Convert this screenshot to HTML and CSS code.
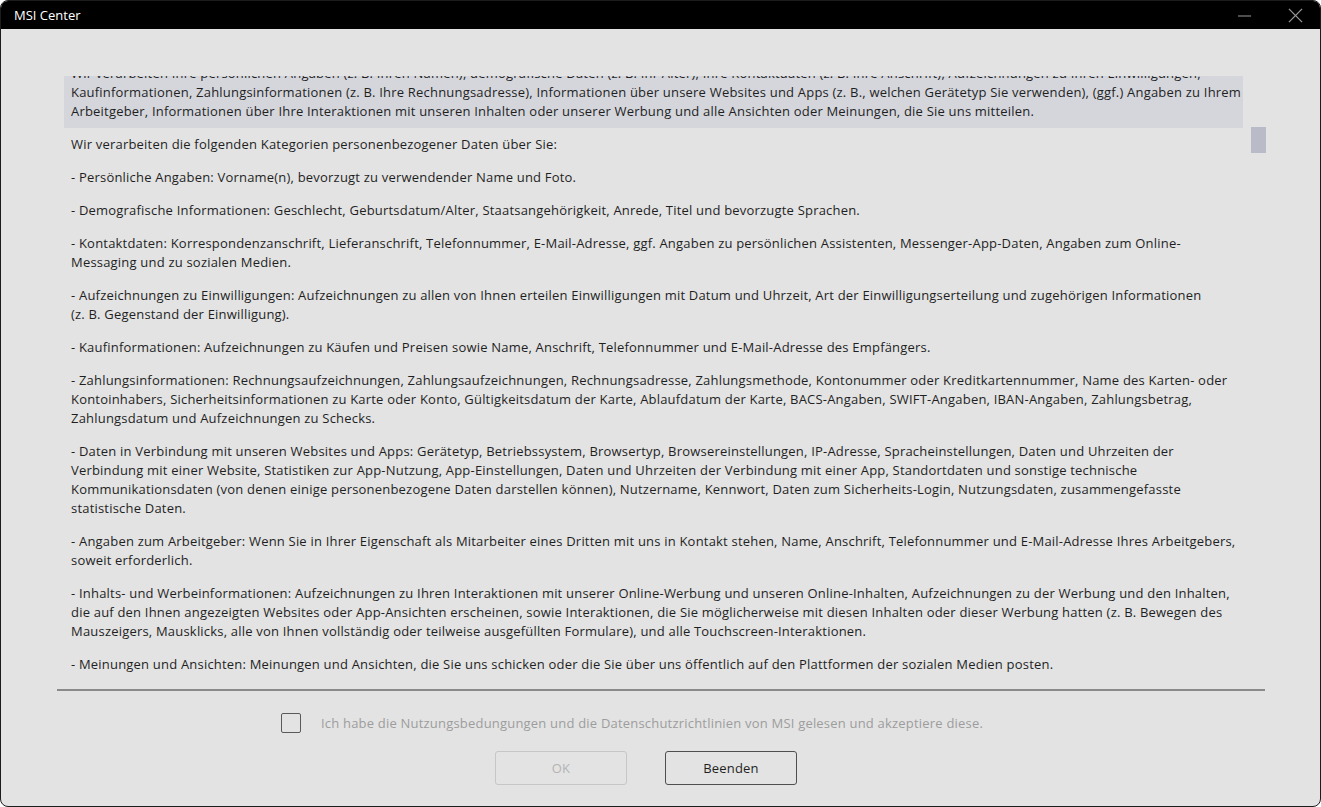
FILE: index.html
```html
<!DOCTYPE html>
<html>
<head>
    <meta charset="UTF-8">
    <title>MSI Center</title>
    <link rel="stylesheet" href="styles.css">
</head>
<body>
<div class="window">
    <div class="titlebar">
        <span class="title">MSI Center</span>
        <div class="window-controls">
            <svg class="win-btn" viewBox="0 0 16 16" fill="none" stroke="currentColor" stroke-width="1.2">
                <line x1="1" y1="8.5" x2="15" y2="8.5"></line>
            </svg>
            <svg class="win-btn" viewBox="0 0 16 16" fill="none" stroke="currentColor" stroke-width="1.3">
                <line x1="1" y1="1" x2="15" y2="15"></line>
                <line x1="15" y1="1" x2="1" y2="15"></line>
            </svg>
        </div>
    </div>

    <div class="content">
        <div class="doc-area">
            <div class="doc">
                <div class="doc-inner">
                    <p class="selected">Wir verarbeiten Ihre persönlichen Angaben (z. B. Ihren Namen), demografische Daten (z. B. Ihr Alter), Ihre Kontaktdaten (z. B. Ihre Anschrift), Aufzeichnungen zu Ihren Einwilligungen,<br>Kaufinformationen, Zahlungsinformationen (z. B. Ihre Rechnungsadresse), Informationen über unsere Websites und Apps (z. B., welchen Gerätetyp Sie verwenden), (ggf.) Angaben zu Ihrem<br>Arbeitgeber, Informationen über Ihre Interaktionen mit unseren Inhalten oder unserer Werbung und alle Ansichten oder Meinungen, die Sie uns mitteilen.</p>
                    <p>Wir verarbeiten die folgenden Kategorien personenbezogener Daten über Sie:</p>
                    <p>- Persönliche Angaben: Vorname(n), bevorzugt zu verwendender Name und Foto.</p>
                    <p>- Demografische Informationen: Geschlecht, Geburtsdatum/Alter, Staatsangehörigkeit, Anrede, Titel und bevorzugte Sprachen.</p>
                    <p>- Kontaktdaten: Korrespondenzanschrift, Lieferanschrift, Telefonnummer, E-Mail-Adresse, ggf. Angaben zu persönlichen Assistenten, Messenger-App-Daten, Angaben zum Online-<br>Messaging und zu sozialen Medien.</p>
                    <p>- Aufzeichnungen zu Einwilligungen: Aufzeichnungen zu allen von Ihnen erteilen Einwilligungen mit Datum und Uhrzeit, Art der Einwilligungserteilung und zugehörigen Informationen<br>(z. B. Gegenstand der Einwilligung).</p>
                    <p>- Kaufinformationen: Aufzeichnungen zu Käufen und Preisen sowie Name, Anschrift, Telefonnummer und E-Mail-Adresse des Empfängers.</p>
                    <p>- Zahlungsinformationen: Rechnungsaufzeichnungen, Zahlungsaufzeichnungen, Rechnungsadresse, Zahlungsmethode, Kontonummer oder Kreditkartennummer, Name des Karten- oder<br>Kontoinhabers, Sicherheitsinformationen zu Karte oder Konto, Gültigkeitsdatum der Karte, Ablaufdatum der Karte, BACS-Angaben, SWIFT-Angaben, IBAN-Angaben, Zahlungsbetrag,<br>Zahlungsdatum und Aufzeichnungen zu Schecks.</p>
                    <p>- Daten in Verbindung mit unseren Websites und Apps: Gerätetyp, Betriebssystem, Browsertyp, Browsereinstellungen, IP-Adresse, Spracheinstellungen, Daten und Uhrzeiten der<br>Verbindung mit einer Website, Statistiken zur App-Nutzung, App-Einstellungen, Daten und Uhrzeiten der Verbindung mit einer App, Standortdaten und sonstige technische<br>Kommunikationsdaten (von denen einige personenbezogene Daten darstellen können), Nutzername, Kennwort, Daten zum Sicherheits-Login, Nutzungsdaten, zusammengefasste<br>statistische Daten.</p>
                    <p>- Angaben zum Arbeitgeber: Wenn Sie in Ihrer Eigenschaft als Mitarbeiter eines Dritten mit uns in Kontakt stehen, Name, Anschrift, Telefonnummer und E-Mail-Adresse Ihres Arbeitgebers,<br>soweit erforderlich.</p>
                    <p>- Inhalts- und Werbeinformationen: Aufzeichnungen zu Ihren Interaktionen mit unserer Online-Werbung und unseren Online-Inhalten, Aufzeichnungen zu der Werbung und den Inhalten,<br>die auf den Ihnen angezeigten Websites oder App-Ansichten erscheinen, sowie Interaktionen, die Sie möglicherweise mit diesen Inhalten oder dieser Werbung hatten (z. B. Bewegen des<br>Mauszeigers, Mausklicks, alle von Ihnen vollständig oder teilweise ausgefüllten Formulare), und alle Touchscreen-Interaktionen.</p>
                    <p>- Meinungen und Ansichten: Meinungen und Ansichten, die Sie uns schicken oder die Sie über uns öffentlich auf den Plattformen der sozialen Medien posten.</p>
                </div>
            </div>
            <div class="scrollbar">
                <div class="scroll-thumb"></div>
            </div>
        </div>

        <div class="separator"></div>

        <label class="agree-row">
            <span class="checkbox"></span>
            <span class="agree-text">Ich habe die Nutzungsbedungungen und die Datenschutzrichtlinien von MSI gelesen und akzeptiere diese.</span>
        </label>

        <div class="button-row">
            <button class="btn" disabled>OK</button>
            <button class="btn">Beenden</button>
        </div>
    </div>
</div>
</body>
</html>
```

FILE: styles.css
```css
:root {
    --window-bg: #e3e3e3;
    --text-color: #1f1f1f;
    --muted-color: #9d9d9d;
    --selected-bg: #d5d6dc;
    --thumb-color: #b9bcc8;
}

* {
    box-sizing: border-box;
}

html, body {
    margin: 0;
    padding: 0;
    background-color: #ffffff;
}

body {
    font-family: 'Open Sans', 'Noto Sans', sans-serif;
    font-size: 13px;
    letter-spacing: 0.2px;
    color: var(--text-color);
}

.window {
    width: 1321px;
    height: 807px;
    border: 1px solid #1c1c1c;
    border-radius: 8px;
    overflow: hidden;
    background-color: var(--window-bg);
    display: flex;
    flex-direction: column;
}

.titlebar {
    height: 28px;
    background-color: #000000;
    display: flex;
    align-items: center;
    justify-content: space-between;
    padding: 0 17px 0 13px;
    flex-shrink: 0;
}

.title {
    color: #ffffff;
    font-size: 13px;
    letter-spacing: 0;
}

.window-controls {
    display: flex;
    align-items: center;
    gap: 36px;
    color: #9a9a9a;
}

.win-btn {
    width: 15px;
    height: 15px;
}

.content {
    flex: 1;
    padding: 47px 54px 0 56px;
    display: flex;
    flex-direction: column;
}

.doc-area {
    height: 611px;
    display: flex;
}

.doc {
    flex: 1;
    overflow: hidden;
    padding-left: 7px;
}

/* list is shown scrolled down a little */
.doc-inner {
    margin-top: -17px;
    width: 1179px;
}

.doc-inner p {
    margin: 0 0 4px;
    padding: 5px 7px;
    line-height: 19px;
    white-space: nowrap;
}

.doc-inner p.selected {
    background-color: var(--selected-bg);
    padding-bottom: 7px;
    margin-bottom: 2px;
}

.scrollbar {
    width: 17px;
    padding-left: 2px;
}

.scroll-thumb {
    margin-top: 51px;
    width: 15px;
    height: 26px;
    background-color: var(--thumb-color);
}

.separator {
    margin-top: 2px;
    border-top: 2px solid #8a8a8a;
    margin-right: 1px;
}

.agree-row {
    display: flex;
    align-items: center;
    gap: 20px;
    margin-top: 22px;
    padding-left: 224px;
    height: 20px;
}

.checkbox {
    width: 20px;
    height: 20px;
    border: 1px solid #5a5a5a;
    border-radius: 2px;
}

.agree-text {
    color: var(--muted-color);
}

.button-row {
    display: flex;
    gap: 38px;
    margin-top: 18px;
    padding-left: 438px;
}

.btn {
    width: 132px;
    height: 34px;
    background-color: var(--window-bg);
    border: 1px solid #4f4f4f;
    border-radius: 3px;
    font-family: 'Open Sans', 'Noto Sans', sans-serif;
    font-size: 13px;
    letter-spacing: 0.2px;
    color: var(--text-color);
    padding: 0;
}

.btn:disabled {
    border-color: #c6c6c6;
    color: #b4b4b4;
}
```
